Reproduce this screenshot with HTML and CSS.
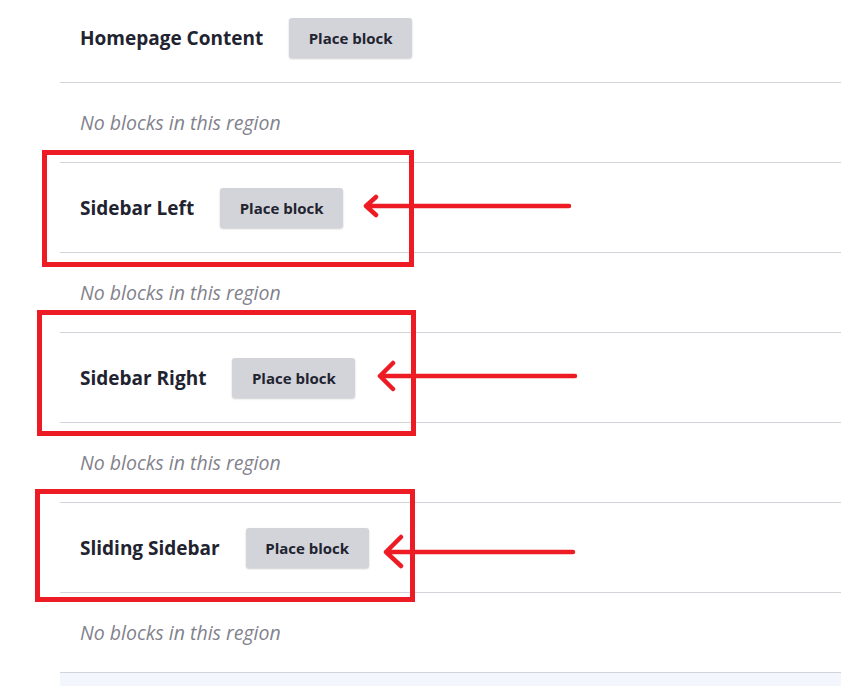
FILE: index.html
```html
<!DOCTYPE html>
<html lang="en">
<head>
  <meta charset="UTF-8">
  <meta name="viewport" content="width=device-width, initial-scale=1.0">
  <title>Block layout</title>
  <link rel="stylesheet" href="styles.css">
</head>
<body>
  <div class="region-list">
    <div class="region-title">
      <h2 class="region-name">Homepage Content</h2>
      <button class="button">Place block</button>
    </div>
    <div class="region-empty">No blocks in this region</div>

    <div class="region-title">
      <h2 class="region-name">Sidebar Left</h2>
      <button class="button">Place block</button>
    </div>
    <div class="region-empty">No blocks in this region</div>

    <div class="region-title">
      <h2 class="region-name">Sidebar Right</h2>
      <button class="button">Place block</button>
    </div>
    <div class="region-empty">No blocks in this region</div>

    <div class="region-title">
      <h2 class="region-name">Sliding Sidebar</h2>
      <button class="button">Place block</button>
    </div>
    <div class="region-empty">No blocks in this region</div>

    <div class="region-footer"></div>
  </div>

  <!-- red annotations drawn over the screenshot -->
  <svg class="annotations" viewBox="0 0 841 686" fill="none" stroke="#ed1c24" stroke-linecap="round" stroke-linejoin="round">
    <rect x="44.5" y="152.5" width="367" height="112" stroke-width="5" stroke-linejoin="miter"/>
    <rect x="39.5" y="312.5" width="374" height="121" stroke-width="5" stroke-linejoin="miter"/>
    <rect x="37.5" y="491.5" width="375" height="108" stroke-width="5" stroke-linejoin="miter"/>

    <path d="M366 206 H569 M376 197 L366 206 L376 215" stroke-width="4.5"/>
    <path d="M380 376 H575 M393 363 L380 376 L393 389" stroke-width="4.5"/>
    <path d="M386 552 H573 M401 537 L386 552 L401 566" stroke-width="4.5"/>
  </svg>
</body>
</html>
```

FILE: styles.css
```css
body {
  margin: 0;
  padding: 0;
  width: 841px;
  height: 686px;
  overflow: hidden;
  position: relative;
  background: white;
  font-family: "Open Sans", "Noto Sans", sans-serif;
  color: #222330;
}
.region-list {
  margin: -7px 0 0 60px;
}
.region-title {
  height: 89px;
  display: flex;
  align-items: center;
  gap: 26px;
  padding-left: 20px;
  border-bottom: 1px solid #d3d4d9;
}
.region-name {
  margin: 0;
  font-size: 19px;
  font-weight: 700;
}
.button {
  width: 123px;
  height: 40px;
  padding: 0;
  border: none;
  border-radius: 3px;
  background: #d3d4d9;
  color: #222330;
  font-family: inherit;
  font-size: 15px;
  font-weight: 700;
  box-shadow: 0 1px 2px rgba(0,0,0,0.2);
  cursor: pointer;
}
.region-empty {
  height: 79px;
  display: flex;
  align-items: center;
  padding-left: 20px;
  border-bottom: 1px solid #d3d4d9;
  font-size: 19.5px;
  font-style: italic;
  color: #82828c;
}
.region-footer {
  height: 40px;
  background: #f3f6fd;
}
.annotations {
  position: absolute;
  top: 0;
  left: 0;
  width: 841px;
  height: 686px;
  pointer-events: none;
}
```
